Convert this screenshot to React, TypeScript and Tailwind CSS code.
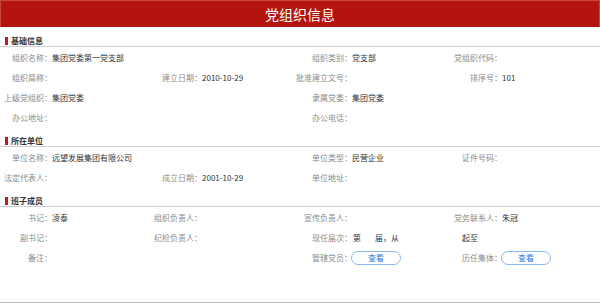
import React from 'react';

type Cell = { label: string; value?: React.ReactNode };

const font = { fontFamily: '"Noto Sans CJK SC", "Noto Sans", sans-serif' };

const SectionTitle: React.FC<{ title: string }> = ({ title }) => (
  <div className="h-[19px] flex items-end border-b border-[#cfcfcf]">
    <div className="flex items-center h-[10px]">
      <span className="ml-[5px] w-[3px] h-[8px] bg-[#c8161d]" />
      <span className="ml-[3px] text-[8px] leading-none font-bold text-[#333]">{title}</span>
    </div>
  </div>
);

const Field: React.FC<Cell> = ({ label, value }) => (
  <div className="w-[150px] flex items-center h-[20px]">
    <div className="w-[52px] shrink-0 flex justify-end whitespace-nowrap text-[#8a8a8a]">{label ? label + '：' : ''}</div>
    <div className="whitespace-nowrap text-[#333]">{value}</div>
  </div>
);

const Row: React.FC<{ cells: Cell[] }> = ({ cells }) => (
  <div className="flex">
    {cells.map((c, i) => (
      <Field key={i} label={c.label} value={c.value} />
    ))}
  </div>
);

const ViewButton: React.FC = () => (
  <button className="-ml-[1px] w-[50px] h-[14px] rounded-full border border-[#8ab6f2] text-[#2f78de] text-[8px] leading-none flex items-center justify-center">
    查看
  </button>
);

const App: React.FC = () => {
  return (
    <div className="w-[600px] h-[303px] bg-white flex flex-col text-[8px] leading-none overflow-hidden" style={font}>
      <div className="h-[27px] bg-[#b3150e] border-t border-x border-[#c7463f] flex items-center justify-center">
        <span className="text-white text-[14px] leading-none">党组织信息</span>
      </div>

      <div className="mt-[1px]">
        <SectionTitle title="基础信息" />
        <div className="mt-[1px]">
          <Row cells={[
            { label: '组织名称', value: '集团党委第一党支部' },
            { label: '', value: '' },
            { label: '组织类别', value: '党支部' },
            { label: '党组织代码', value: '' },
          ]} />
          <Row cells={[
            { label: '组织简称', value: '' },
            { label: '建立日期', value: '2010-10-29' },
            { label: '批准建立文号', value: '' },
            { label: '排序号', value: '101' },
          ]} />
          <Row cells={[
            { label: '上级党组织', value: '集团党委' },
            { label: '', value: '' },
            { label: '隶属党委', value: '集团党委' },
            { label: '', value: '' },
          ]} />
          <Row cells={[
            { label: '办公地址', value: '' },
            { label: '', value: '' },
            { label: '办公电话', value: '' },
            { label: '', value: '' },
          ]} />
        </div>
      </div>

      <div>
        <SectionTitle title="所在单位" />
        <div className="mt-[1px]">
          <Row cells={[
            { label: '单位名称', value: '远望发展集团有限公司' },
            { label: '', value: '' },
            { label: '单位类型', value: '民营企业' },
            { label: '证件号码', value: '' },
          ]} />
          <Row cells={[
            { label: '法定代表人', value: '' },
            { label: '成立日期', value: '2001-10-29' },
            { label: '单位地址', value: '' },
            { label: '', value: '' },
          ]} />
        </div>
      </div>

      <div className="flex-1 flex flex-col">
        <SectionTitle title="班子成员" />
        <div className="mt-[1px]">
          <Row cells={[
            { label: '书记', value: '凌泰' },
            { label: '组织负责人', value: '' },
            { label: '宣传负责人', value: '' },
            { label: '党务联系人', value: '朱冠' },
          ]} />
          <div className="flex h-[20px] items-center">
            <Field label="副书记" value="" />
            <Field label="纪检负责人" value="" />
            <div className="flex items-center whitespace-nowrap">
              <div className="w-[52px] shrink-0 flex justify-end text-[#8a8a8a]">现任届次：</div>
              <span className="ml-[1px] text-[#333]">第</span>
              <span className="ml-[14px] text-[#333]">届，从</span>
              <span className="ml-[63px] text-[#333]">起至</span>
            </div>
          </div>
          <div className="flex h-[20px] items-center">
            <Field label="备注" value="" />
            <Field label="" value="" />
            <div className="w-[150px] flex items-center">
              <div className="w-[52px] shrink-0 flex justify-end text-[#8a8a8a]">管辖党员：</div>
              <ViewButton />
            </div>
            <div className="w-[150px] flex items-center">
              <div className="w-[52px] shrink-0 flex justify-end text-[#8a8a8a]">历任集体：</div>
              <ViewButton />
            </div>
          </div>
        </div>
        <div className="flex-1 border-b border-[#bdbdbd]" />
      </div>
    </div>
  );
};

export default App;
